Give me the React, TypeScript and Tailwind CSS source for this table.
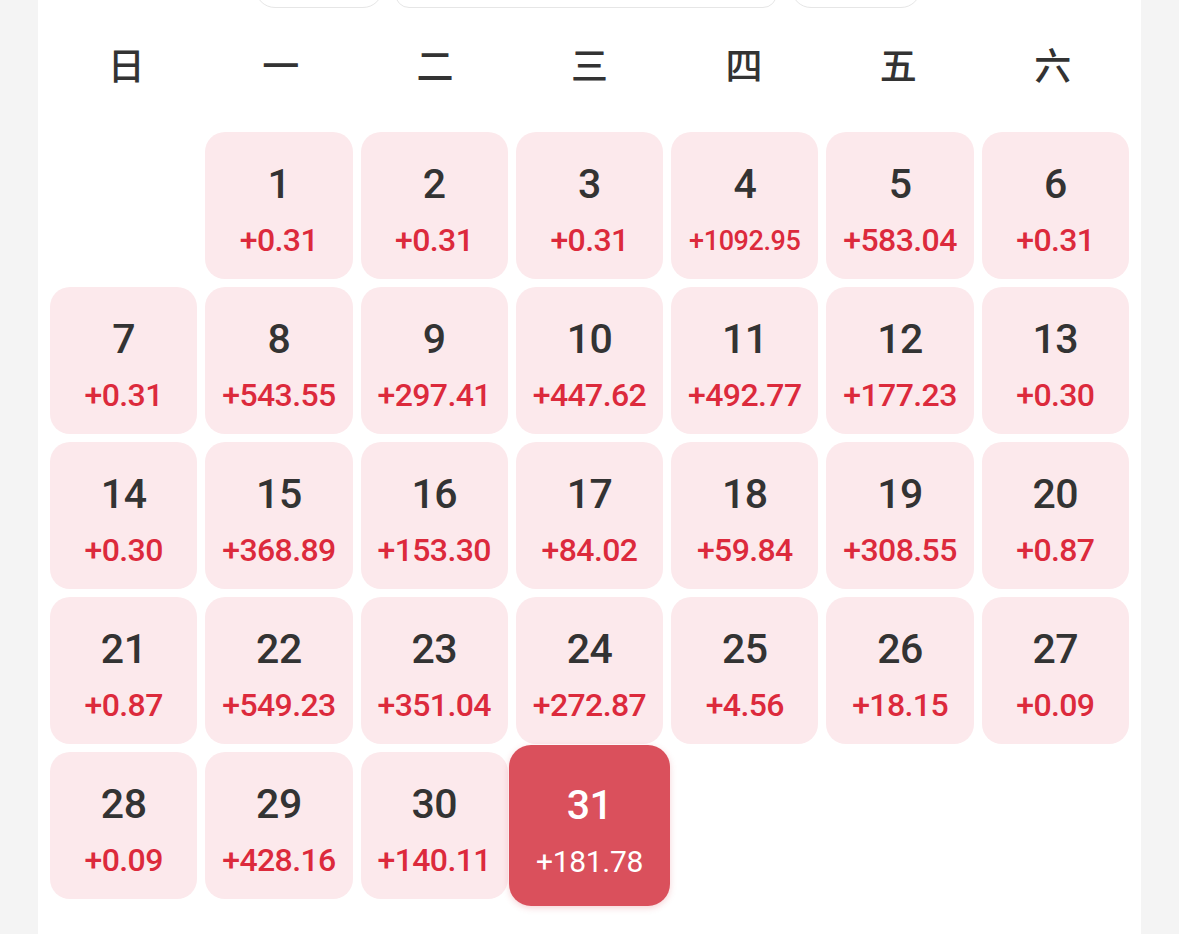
import React from "react";

const weekdays = ["日", "一", "二", "三", "四", "五", "六"];

const values: string[] = [
  "+0.31", "+0.31", "+0.31", "+1092.95", "+583.04", "+0.31",
  "+0.31", "+543.55", "+297.41", "+447.62", "+492.77", "+177.23", "+0.30",
  "+0.30", "+368.89", "+153.30", "+84.02", "+59.84", "+308.55", "+0.87",
  "+0.87", "+549.23", "+351.04", "+272.87", "+4.56", "+18.15", "+0.09",
  "+0.09", "+428.16", "+140.11", "+181.78",
];

const numFont = { fontFamily: "Roboto, 'Noto Sans', sans-serif" };

function DayCell({ day, value }: { day: number; value: string }) {
  const active = day === 31;
  const long = value.length >= 8;
  if (active) {
    return (
      <div className="relative z-10 -m-[7px] flex flex-col items-center rounded-[22px] bg-[#da505c] shadow-[0_2px_6px_rgba(218,80,92,0.25)]">
        <div className="mt-[40px] text-[41px] leading-none font-medium tracking-[-0.5px] text-white">{day}</div>
        <div className="mt-[21px] text-[30px] leading-none tracking-[-0.3px] text-white">{value}</div>
      </div>
    );
  }
  return (
    <div className="flex h-[147px] flex-col items-center rounded-[20px] bg-[#fce9ec]">
      <div className="mt-[32px] text-[41px] leading-none font-medium tracking-[-0.5px] text-[#333333]">{day}</div>
      {long ? (
        <div className="mt-[23px] text-[27px] leading-none font-medium tracking-[-0.4px] text-[#dc2a3c]">{value}</div>
      ) : (
        <div className="mt-[19px] text-[32px] leading-none font-medium tracking-[-0.6px] text-[#dc2a3c]">{value}</div>
      )}
    </div>
  );
}

export default function App() {
  return (
    <div className="min-h-screen w-full bg-[#f4f4f4]">
      <div className="mx-[38px] flex h-[934px] flex-col overflow-hidden bg-white">
        {/* pills (scrolled off top) */}
        <div className="-mt-[32px] flex h-[40px] shrink-0">
          <div className="ml-[217px] w-[128px] rounded-[20px] border border-[#e6e6e6]" />
          <div className="ml-[12px] w-[382px] rounded-[14px] border border-[#e6e6e6]" />
          <div className="ml-[14px] w-[130px] rounded-[20px] border border-[#e6e6e6]" />
        </div>
        <div className="mt-[32px] grid h-[48px] grid-cols-7 px-[11px]">
          {weekdays.map((w) => (
            <div
              key={w}
              className="flex items-center justify-center text-[37px] leading-none font-medium text-[#333333]"
              style={{ fontFamily: "'Noto Sans CJK SC', 'Noto Sans', sans-serif" }}
            >
              {w}
            </div>
          ))}
        </div>
        <div className="mt-[44px] grid grid-cols-7 gap-[8px] px-[12px]" style={numFont}>
          <div />
          {values.map((v, i) => (
            <DayCell key={i} day={i + 1} value={v} />
          ))}
        </div>
      </div>
    </div>
  );
}
